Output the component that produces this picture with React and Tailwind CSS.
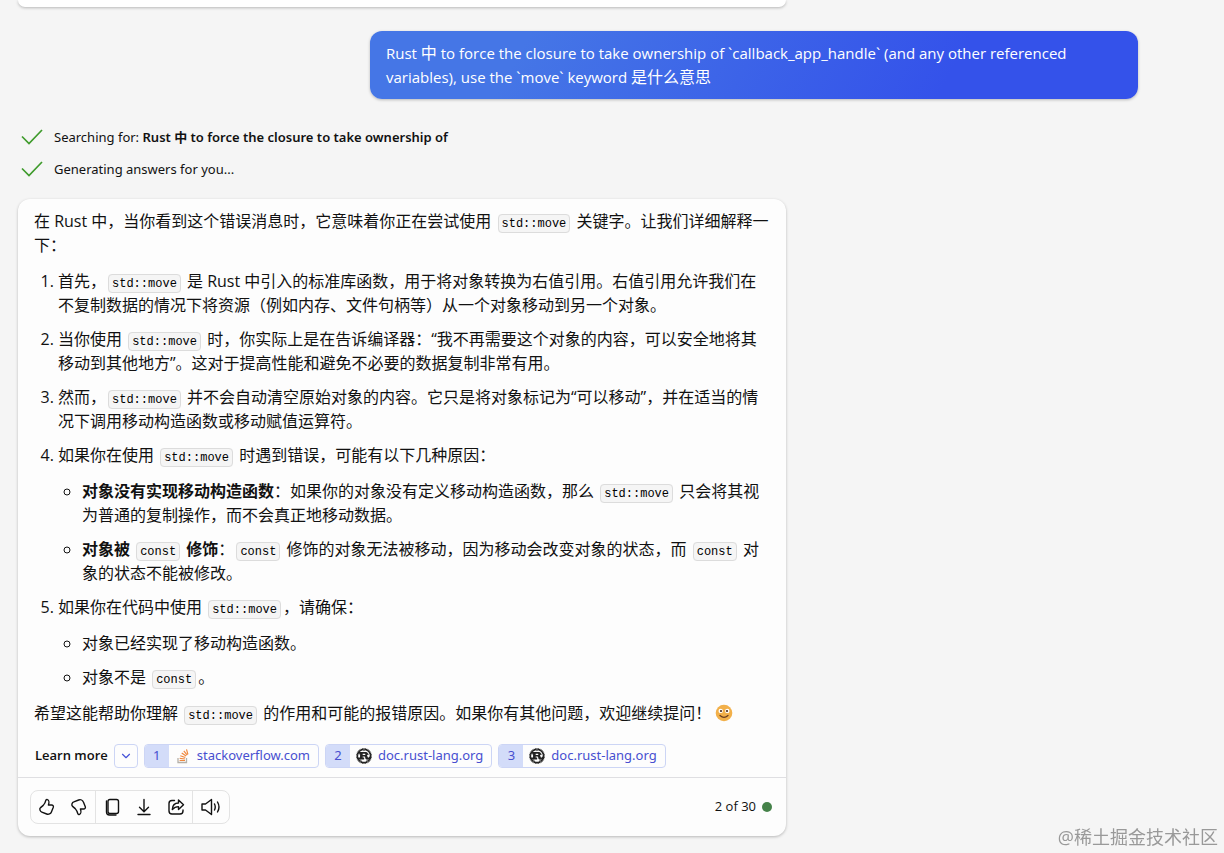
import { ChevronDown } from "lucide-react";
import { SiRust } from "react-icons/si";

const sources = [
  { id: 1, label: "stackoverflow.com", icon: "so" },
  { id: 2, label: "doc.rust-lang.org", icon: "rust" },
  { id: 3, label: "doc.rust-lang.org", icon: "rust" },
];

const actions = [
  [
    {
      name: "Like",
      paths: [
        "M10.5 2.6c-.8-.4-1.5 0-1.7.8-.4 2.2-1.200 3.400-2.600 5L3.600 10.600c-.7.7-1 1.600-.6 2.500.3 1 .8 1.700 1.800 2l4.900 1.900c1.900.7 4-.2 4.700-2.100l1.900-4.600c.4-1.200-.4-2.300-1.700-2.300h-3.200c.8-2 .7-4.700-.9-5.400Z",
      ],
    },
    {
      name: "Dislike",
      paths: [
        "M10.500 17.400c-.8.4-1.500 0-1.700-.8-.4-2.200-1.200-3.400-2.600-5L3.600 9.400c-.7-.7-1-1.600-.6-2.500.3-1 .8-1.700 1.800-2L9.700 3c1.900-.7 4 .2 4.700 2.100l1.900 4.600c.4 1.200-.4 2.300-1.700 2.300h-3.200c.8 2 .7 4.700-.9 5.400Z",
      ],
    },
  ],
  [
    {
      name: "Copy",
      paths: [
        "M8 2.500h6.500a2 2 0 0 1 2 2v10a2 2 0 0 1-2 2H8a2 2 0 0 1-2-2v-10a2 2 0 0 1 2-2Z",
        "M4.500 4v11a3 3 0 0 0 3 3H14",
      ],
    },
    {
      name: "Download",
      paths: ["M10 2.500v12M5.500 10.200l4.500 4.500 4.500-4.500M4 17.500h12"],
    },
    {
      name: "Share",
      paths: [
        "M8.500 3.500H6a3 3 0 0 0-3 3V14a3 3 0 0 0 3 3h8a3 3 0 0 0 3-3v-1",
        "M12.500 3v3c-4 0-6 2.500-6.200 6.500 1.700-2 3.500-2.900 6.200-2.900v3l5-4.800L12.500 3Z",
      ],
    },
  ],
];

function Code({ children }) {
  return (
    <code className="mx-0.5 rounded border border-[#dcdcdc] bg-[#f5f5f5] px-[3px] pt-0.5 pb-px font-['Liberation_Mono',monospace] text-xs leading-none font-normal text-black">
      {children}
    </code>
  );
}

function Check() {
  return (
    <svg viewBox="0 0 22 16" className="h-4 w-[22px]" fill="none" stroke="#3f9b2c" strokeWidth="1.7">
      <path d="M1 7.500l7 7L21 1" />
    </svg>
  );
}

function StackOverflow() {
  return (
    <svg viewBox="0 0 16 16" className="size-4" fill="none">
      <path d="M3 10v4.500h8.500V10" stroke="#b5b1aa" strokeWidth="1.3" />
      <path
        d="M4.600 12.500h5.400M4.700 10.300l5.300.7M5.300 7.700l5 1.800M6.700 5.100l4.400 3M8.800 2.900l3.400 4.200M11.500 1.300l1.400 5"
        stroke="#f0883e"
        strokeWidth="1.2"
      />
    </svg>
  );
}

function Smile() {
  return (
    <svg viewBox="0 0 18 18" className="inline-block size-[18px] align-[-3px]" role="img" aria-label="smile">
      <circle cx="9" cy="9" r="8.3" fill="#f2b04a" />
      <circle cx="5.7" cy="6.9" r="2.2" fill="#fff" />
      <circle cx="12.3" cy="6.9" r="2.2" fill="#fff" />
      <circle cx="6" cy="7" r="1.1" fill="#4a2b1d" />
      <circle cx="12" cy="7" r="1.1" fill="#4a2b1d" />
      <path d="M5 11.500q4 3.600 8 0" fill="none" stroke="#6b3d1e" strokeWidth="1.2" strokeLinecap="round" />
    </svg>
  );
}

function ToolIcon({ paths }) {
  return (
    <svg
      viewBox="0 0 20 20"
      className="size-5"
      fill="none"
      stroke="currentColor"
      strokeWidth="1.4"
      strokeLinecap="round"
      strokeLinejoin="round"
    >
      {paths.map((d) => (
        <path key={d} d={d} />
      ))}
    </svg>
  );
}

function Answer() {
  return (
    <div className="pt-[10px] pr-[14px] pl-4 text-base leading-6">
      <p>
        在 Rust 中，当你看到这个错误消息时，它意味着你正在尝试使用 <Code>std::move</Code> 关键字。让我们详细解释一下：
      </p>
      <ol className="my-3 list-decimal space-y-[10px] pl-6">
        <li>
          首先，<Code>std::move</Code> 是 Rust 中引入的标准库函数，用于将对象转换为右值引用。右值引用允许我们在不复制数据的情况下将资源（例如内存、文件句柄等）从一个对象移动到另一个对象。
        </li>
        <li>
          当你使用 <Code>std::move</Code> 时，你实际上是在告诉编译器：“我不再需要这个对象的内容，可以安全地将其移动到其他地方”。这对于提高性能和避免不必要的数据复制非常有用。
        </li>
        <li>
          然而，<Code>std::move</Code> 并不会自动清空原始对象的内容。它只是将对象标记为“可以移动”，并在适当的情况下调用移动构造函数或移动赋值运算符。
        </li>
        <li>
          如果你在使用 <Code>std::move</Code> 时遇到错误，可能有以下几种原因：
          <ul className="mt-3 list-[circle] space-y-[10px] pl-6">
            <li>
              <strong>对象没有实现移动构造函数</strong>：如果你的对象没有定义移动构造函数，那么 <Code>std::move</Code> 只会将其视为普通的复制操作，而不会真正地移动数据。
            </li>
            <li>
              <strong>
                对象被 <Code>const</Code> 修饰
              </strong>
              ：<Code>const</Code> 修饰的对象无法被移动，因为移动会改变对象的状态，而 <Code>const</Code> 对象的状态不能被修改。
            </li>
          </ul>
        </li>
        <li>
          如果你在代码中使用 <Code>std::move</Code>，请确保：
          <ul className="mt-3 list-[circle] space-y-[10px] pl-6">
            <li>对象已经实现了移动构造函数。</li>
            <li>
              对象不是 <Code>const</Code>。
            </li>
          </ul>
        </li>
      </ol>
      <p>
        希望这能帮助你理解 <Code>std::move</Code> 的作用和可能的报错原因。如果你有其他问题，欢迎继续提问！ <Smile />
      </p>
    </div>
  );
}

export default function App() {
  return (
    <div className="min-h-screen bg-[#f5f5f5] font-['Open_Sans','Noto_Sans_CJK_SC',sans-serif] text-[#111]">
      <main className="max-w-[1224px] pr-[86px] pl-[18px]">
        {/* PREVIOUS ANSWER */}
        <div className="h-[7px] max-w-3xl rounded-b-xl bg-white shadow-[0_1px_3px_rgba(0,0,0,0.25)]" />

        {/* QUESTION */}
        <div className="mt-6 ml-auto max-w-3xl rounded-xl bg-[linear-gradient(120deg,#4576e6_20%,#3452ea_75%)] px-4 py-[10px] text-[15px] leading-6 text-white shadow-[0_1px_3px_rgba(0,0,0,0.25)]">
          Rust <span className="text-base">中</span> to force the closure to take ownership of `callback_app_handle` (and any other referenced variables), use the `move` keyword <span className="text-base">是什么意思</span>
        </div>

        {/* STATUS */}
        <ul className="mt-[22px] font-['Noto_Sans','Noto_Sans_CJK_SC',sans-serif] text-[13px] leading-8">
          <li className="flex items-center gap-[11px] pl-[3px]">
            <Check />
            <span>
              Searching for: <b className="font-semibold">Rust 中 to force the closure to take ownership of</b>
            </span>
          </li>
          <li className="flex items-center gap-[11px] pl-[3px]">
            <Check />
            <span>Generating answers for you...</span>
          </li>
        </ul>

        {/* ANSWER */}
        <section className="mt-[14px] max-w-3xl rounded-xl bg-[#fdfdfd] shadow-[0_1px_3px_rgba(0,0,0,0.25)]">
          <Answer />

          <div className="mt-[19px] flex flex-wrap items-center gap-[6px] px-[17px] pb-[9px] text-[13px]">
            <span className="font-semibold">Learn more</span>
            <button type="button" aria-label="Show sources" className="flex size-6 items-center justify-center rounded border border-[#ccd5f5] text-[#4653d8]">
              <ChevronDown size={14} strokeWidth={2} />
            </button>
            {sources.map((s) => (
              <a key={s.id} href="#" className="flex h-6 items-center overflow-hidden rounded border border-[#ccd5f5] pr-2 font-['Noto_Sans',sans-serif] text-[#474fd0]">
                <span className="flex h-full w-6 items-center justify-center bg-[#d3dcf9]">{s.id}</span>
                <span className="mx-[6px]">
                  {s.icon === "so" ? <StackOverflow /> : <SiRust size={16} className="text-[#222]" />}
                </span>
                {s.label}
              </a>
            ))}
          </div>

          <footer className="flex items-center justify-between border-t border-[#dfdfe2] px-3 py-3">
            <div className="flex h-[34px] divide-x divide-[#e3e3e3] rounded-lg border border-[#e3e3e3]">
              {actions.map((group) => (
                <div key={group[0].name} className="flex">
                  {group.map((a) => (
                    <button key={a.name} type="button" aria-label={a.name} className="flex w-8 items-center justify-center">
                      <ToolIcon paths={a.paths} />
                    </button>
                  ))}
                </div>
              ))}
              <button type="button" aria-label="Read aloud" className="flex w-9 items-center justify-center">
                <ToolIcon paths={["M1 7v6h3.500l6 4.500v-15L4.500 7H1Z", "M13.500 7q1.500 3 0 6M16.500 5q3 5 0 10"]} />
              </button>
            </div>
            <p className="flex items-center gap-[6px] pr-[2px] text-[13px]">
              2 of 30 <span className="size-[10px] rounded-full bg-[#458249]" />
            </p>
          </footer>
        </section>
      </main>

      <div className="fixed right-[6px] bottom-[2px] text-lg leading-7 text-[#999]">@稀土掘金技术社区</div>
    </div>
  );
}
